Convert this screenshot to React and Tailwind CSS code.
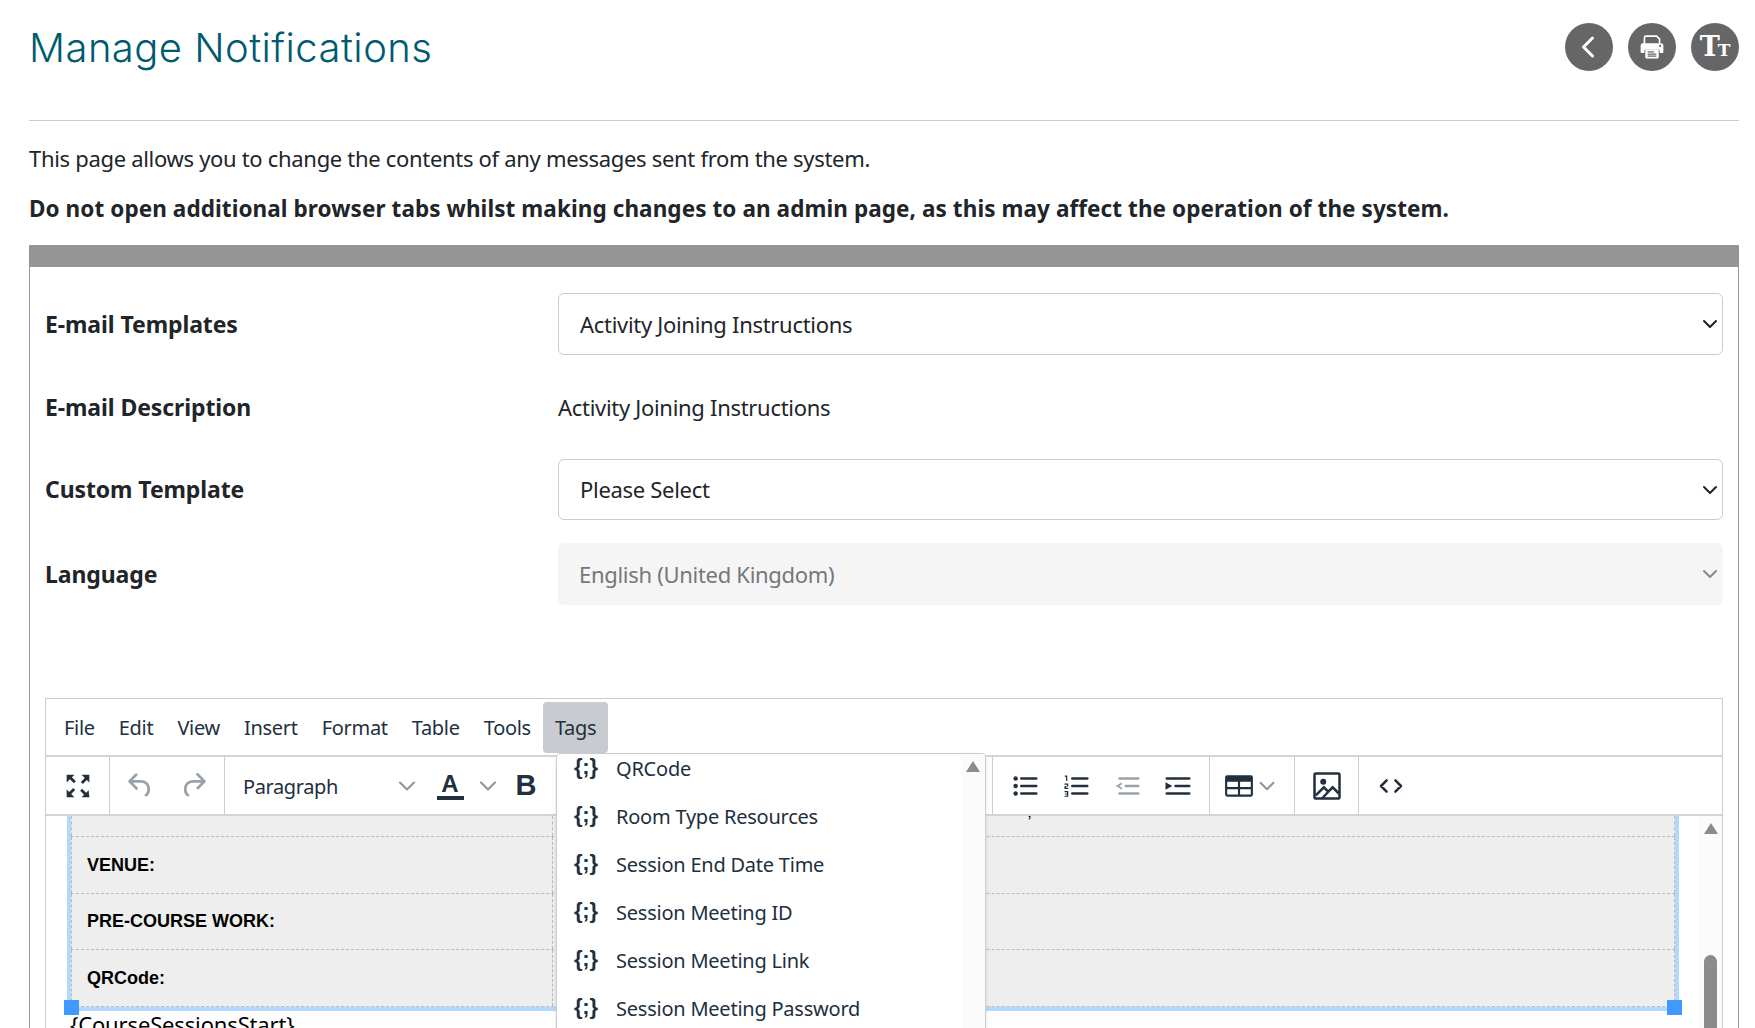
import React from 'react'
import { ChevronDown, ChevronLeft } from 'lucide-react'

const font = { fontFamily: '"Noto Sans", sans-serif' }

const menuItems = ['File', 'Edit', 'View', 'Insert', 'Format', 'Table', 'Tools']
const tags = ['QRCode', 'Room Type Resources', 'Session End Date Time', 'Session Meeting ID', 'Session Meeting Link', 'Session Meeting Password']

function CircleBtn({ children }) {
  return (
    <button className="w-12 h-12 rounded-full bg-[#666666] text-white flex items-center justify-center">
      {children}
    </button>
  )
}

function FormSelect({ value, disabled }) {
  return (
    <div className="relative w-[1165px] h-full">
      <select
        disabled={disabled}
        defaultValue={value}
        className={`appearance-none w-full h-full rounded-md pl-[21px] text-[22px] tracking-[-0.3px] outline-none ${
          disabled ? 'bg-[#f5f5f5] text-[#777777]' : 'bg-white border border-[#cccccc] text-[#212529]'
        }`}>
        <option>{value}</option>
      </select>
      <ChevronDown
        size={24}
        strokeWidth={2}
        className={`absolute right-[1px] top-1/2 -translate-y-1/2 ${disabled ? 'text-[#888888]' : 'text-[#222222]'}`}
      />
    </div>
  )
}

function FormRow({ label, height, children }) {
  return (
    <div className={`flex items-center ${height}`}>
      <div className="w-[513px] text-[23px] font-bold tracking-[-0.1px] text-[#212529]">{label}</div>
      {children}
    </div>
  )
}

function Divider() {
  return <div className="w-px self-stretch bg-[#cccccc]" />
}

const ink = '#222f3e'

function ToolIcon({ children, className = '', muted, size = 30 }) {
  return (
    <svg viewBox="0 0 24 24" width={size} height={size} className={className} fill={muted ? '#9aa1a9' : ink}>
      {children}
    </svg>
  )
}

export default function App() {
  return (
    <div className="h-[1028px] overflow-hidden bg-white pl-[29px] pr-[16px]" style={font}>
      {/* ── Title row ── */}
      <div className="flex justify-between items-start pt-[23px] h-[121px] border-b border-[#cccccc]">
        <h1 className="text-[40px] leading-[50px] tracking-[0.45px] text-[#005a70] font-light" style={{ fontFamily: 'Inter, sans-serif', fontWeight: 300 }}>Manage Notifications</h1>
        <div className="flex gap-[15px]">
          <CircleBtn><ChevronLeft size={36} strokeWidth={2} className="-ml-[2px]" /></CircleBtn>
          <CircleBtn>
            <svg viewBox="0 0 24 24" width="26" height="26">
              <path d="M5 9V3.5A1.5 1.5 0 0 1 6.5 2h9.8L19 4.7V9" fill="none" stroke="#fff" strokeWidth="1.5" />
              <path d="M3.5 8.5h17a2 2 0 0 1 2 2v6a1 1 0 0 1-1 1H19v-3H5v3H2.5a1 1 0 0 1-1-1v-6a2 2 0 0 1 2-2Z" fill="#fff" />
              <path d="M5.8 14.5h12.4v7a1 1 0 0 1-1 1H6.8a1 1 0 0 1-1-1Z" fill="#fff" />
              <path d="M8 16.5h6M8 18.5h8M8 20.5h8" stroke="#666" strokeWidth="1.1" />
              <circle cx="19.5" cy="11" r="1" fill="#666" />
            </svg>
          </CircleBtn>
          <CircleBtn>
            <span className="font-bold leading-none flex items-end -mt-[2px]" style={{ fontFamily: '"DejaVu Serif", serif' }}>
              <span className="text-[27px] leading-[27px]">T</span><span className="text-[17px] leading-[20px] -ml-[2px]">T</span>
            </span>
          </CircleBtn>
        </div>
      </div>

      <p className="mt-[22px] text-[22px] leading-[30px] tracking-[-0.31px] text-[#212529]">This page allows you to change the contents of any messages sent from the system.</p>
      <p className="mt-[21px] text-[22.5px] leading-[30px] font-bold tracking-[0.08px] text-[#212529]">Do not open additional browser tabs whilst making changes to an admin page, as this may affect the operation of the system.</p>

      {/* ── Panel ── */}
      <div className="mt-[21px] h-[800px] border-x border-[#999999]">
        <div className="h-[22px] bg-[#959595] -mx-px" />
        <div className="px-[15px] pt-[26px]">
          <div className="flex flex-col gap-[23px]">
            <FormRow label="E-mail Templates" height="h-[62px]"><FormSelect value="Activity Joining Instructions" /></FormRow>
            <FormRow label="E-mail Description" height="h-[58px]"><span className="text-[22px] tracking-[-0.3px] text-[#212529]">Activity Joining Instructions</span></FormRow>
            <FormRow label="Custom Template" height="h-[61px]"><FormSelect value="Please Select" /></FormRow>
            <FormRow label="Language" height="h-[62px]"><FormSelect value="English (United Kingdom)" disabled /></FormRow>
          </div>

          {/* ── Editor ── */}
          <div className="relative mt-[93px] h-[500px] border border-[#cccccc] text-[#222f3e]">
            <div className="h-[58px] flex items-start pl-[6px] pt-[3px] border-b-2 border-[#d4d4d4] text-[20px] tracking-[-0.3px]">
              {menuItems.map(m => (
                <div key={m} className="h-[51px] px-[12px] flex items-center">{m}</div>
              ))}
              <div className="h-[51px] px-[12px] flex items-center bg-[#c8cbcf] rounded">Tags</div>
            </div>

            <div className="h-[59px] flex items-stretch border-b-2 border-[#d4d4d4]">
              <div className="w-[63px] flex items-center justify-center">
                <ToolIcon size={34}>
                  <path d="M4 4h5.500L7.700 5.800l2.800 2.800-1.400 1.400-2.800-2.800L4 9.500ZM20 4v5.500l-1.800-1.800-2.800 2.800-1.400-1.400 2.800-2.800L14.500 4ZM4 20v-5.500l1.800 1.800 2.800-2.800 1.400 1.400-2.800 2.800L9.500 20ZM20 20h-5.500l1.800-1.800-2.800-2.800 1.400-1.400 2.800 2.800 1.800-1.800Z" />
                </ToolIcon>
              </div>
              <Divider />
              <div className="w-[114px] flex items-center justify-around px-[4px]">
                <ToolIcon muted size={33}>
                  <path d="M6.4 8H12c3.7 0 6.2 2 6.8 5.1.6 2.7-.4 5.6-2.3 6.8a1 1 0 0 1-1-1.8c1.1-.6 1.8-2.7 1.4-4.6-.5-2.1-2.1-3.5-4.9-3.5H6.4l3.3 3.3a1 1 0 1 1-1.4 1.4l-5-5a1 1 0 0 1 0-1.4l5-5a1 1 0 0 1 1.4 1.4L6.4 8Z" />
                </ToolIcon>
                <ToolIcon muted size={33}>
                  <path d="M17.6 10H12c-2.8 0-4.4 1.4-4.9 3.5-.4 2 .3 4 1.4 4.6a1 1 0 1 1-1 1.8c-2-1.2-2.9-4.1-2.3-6.8.6-3 3-5.1 6.8-5.1h5.6l-3.3-3.3a1 1 0 1 1 1.4-1.4l5 5a1 1 0 0 1 0 1.4l-5 5a1 1 0 0 1-1.4-1.4l3.3-3.3Z" />
                </ToolIcon>
              </div>
              <Divider />
              <div className="w-[206px] flex items-center pl-[18px] pt-[3px] text-[20px] tracking-[-0.4px]">
                <span>Paragraph</span>
                <ChevronDown size={28} strokeWidth={1.8} className="ml-auto mr-[10px] -mt-[3px] text-[#8c939b]" />
              </div>
              <div className="w-[38px] flex flex-col items-center justify-center">
                <span className="text-[24px] leading-[25px] font-bold" style={{ fontFamily: '"Liberation Sans", sans-serif' }}>A</span>
                <div className="w-[27px] h-[4px] bg-[#222f3e]" />
              </div>
              <div className="w-[38px] flex items-center justify-center">
                <ChevronDown size={28} strokeWidth={1.8} className="text-[#8c939b]" />
              </div>
              <div className="w-[38px] flex items-center justify-center text-[29px] font-bold" style={{ fontFamily: '"Liberation Sans", sans-serif' }}>B</div>
            </div>

            {/* right part of the toolbar, past the open menu */}
            <div className="absolute top-[58px] left-[946px] h-[57px] flex items-center gap-[21px] pl-[17px] border-l border-[#cccccc]">
              <ToolIcon>
                <circle cx="4.500" cy="6" r="1.800" /><circle cx="4.500" cy="12" r="1.800" /><circle cx="4.500" cy="18" r="1.800" />
                <rect x="8" y="5" width="14" height="2" rx="1" /><rect x="8" y="11" width="14" height="2" rx="1" /><rect x="8" y="17" width="14" height="2" rx="1" />
              </ToolIcon>
              <ToolIcon>
                <path d="M3 3.500h2v4.500H4V4.500H3ZM2.800 10h3v2.400H4v1h1.800v.9h-3v-2.400h2v-1H2.800ZM2.800 16h3v4.600h-3v-.9h2v-.9h-1.600v-.9h1.600V17h-2Z" />
                <rect x="8" y="5" width="14" height="2" rx="1" /><rect x="8" y="11" width="14" height="2" rx="1" /><rect x="8" y="17" width="14" height="2" rx="1" />
              </ToolIcon>
              <ToolIcon muted>
                <rect x="5" y="5" width="17" height="2" rx="1" /><rect x="10" y="11" width="12" height="2" rx="1" /><rect x="5" y="17" width="17" height="2" rx="1" />
                <path d="M8 9 3 12l5 3v-1.600L5.800 12 8 10.600Z" />
              </ToolIcon>
              <ToolIcon>
                <rect x="2" y="5" width="20" height="2" rx="1" /><rect x="9" y="11" width="13" height="2" rx="1" /><rect x="2" y="17" width="20" height="2" rx="1" />
                <path d="M2 9v6l5.500-3Z" />
              </ToolIcon>
            </div>
            <div className="absolute top-[58px] left-[1163px] h-[57px] flex items-stretch">
              <Divider />
              <div className="w-[84px] flex items-center pl-[14px]">
                <svg viewBox="0 0 28 24" width="30" height="26" fill={ink}>
                  <path d="M3 2h22a2 2 0 0 1 2 2v16a2 2 0 0 1-2 2H3a2 2 0 0 1-2-2V4a2 2 0 0 1 2-2Zm0 6v5h10V8Zm12 0v5h10V8ZM3 15v5h10v-5Zm12 0v5h10v-5Z" fillRule="evenodd" />
                </svg>
                <ChevronDown size={26} strokeWidth={1.8} className="text-[#8c939b]" />
              </div>
              <Divider />
              <div className="w-[63px] flex items-center justify-center">
                <svg viewBox="0 0 24 24" width="30" height="30" fill="none" stroke={ink} strokeWidth="2">
                  <rect x="2" y="2" width="20" height="20" rx="1" />
                  <circle cx="9" cy="8.500" r="2.400" fill={ink} stroke="none" />
                  <path d="M3 19.500 9.500 13l3.500 3.500 3.500-3.500 5 5M8 22l8.500-9" />
                </svg>
              </div>
              <Divider />
              <div className="w-[64px] flex items-center justify-center">
                <svg viewBox="0 0 24 24" width="30" height="30" fill="none" stroke={ink} strokeWidth="2" strokeLinecap="round" strokeLinejoin="round">
                  <path d="m8.500 7.500-4.500 4.500 4.500 4.500M15.500 7.500l4.500 4.500-4.500 4.500" />
                </svg>
              </div>
            </div>

            {/* ── Editor body ── */}
            <div className="relative h-[300px] overflow-hidden text-black">
              <div className="ml-[21px] w-[1612px] h-[195px] bg-[#eeeeee] border-x-4 border-b-4 border-[#b4d7ff]">
                {[21, 57, 56, 57].map((h, i) => (
                  <div key={i} className="flex border-b border-dashed border-[#bbbbbb] border-x-0" style={{ height: h }}>
                    <div className="w-[482px] pl-[15px] flex items-center border-x border-dashed border-[#bbbbbb] text-[18px] font-bold" style={{ fontFamily: '"Liberation Sans", sans-serif' }}>
                      {['', 'VENUE:', 'PRE-COURSE WORK:', 'QRCode:'][i]}
                    </div>
                    <div className="flex-1 border-r border-dashed border-[#bbbbbb] relative">
                      {i === 0 && <span className="absolute left-[474px] -top-[18px] text-[18px]" style={{ fontFamily: '"Liberation Sans", sans-serif' }}>,</span>}
                    </div>
                  </div>
                ))}
              </div>
              <p className="ml-[24px] text-[22px] leading-[26px] tracking-[-0.15px]">{'{CourseSessionsStart}'}</p>
              <div className="absolute left-[18px] top-[184px] w-[15px] h-[15px] bg-[#4099ff]" />
              <div className="absolute left-[1621px] top-[184px] w-[15px] h-[15px] bg-[#4099ff]" />
              {/* scrollbar */}
              <div className="absolute right-0 top-0 bottom-0 w-[23px] bg-[#fbfbfb]">
                <div className="mx-auto mt-[7px] w-0 h-0 border-x-[7px] border-x-transparent border-b-[11px] border-b-[#8b8b8b]" />
                <div className="absolute left-[5px] top-[139px] w-[13px] h-[200px] rounded-full bg-[#8b8b8b]" />
              </div>
            </div>

            {/* ── Tags dropdown ── */}
            <div className="absolute left-[510px] top-[54px] w-[430px] h-[300px] bg-white border border-[#cccccc] rounded-t shadow-md overflow-hidden text-[20px] tracking-[-0.23px]">
              <div className="-mt-[9px]">
                {tags.map(t => (
                  <div key={t} className="h-[48px] flex items-center">
                    <span className="w-[59px] pl-[17px] font-bold text-[22px] leading-none -mt-[5px]" style={{ fontFamily: '"Liberation Sans", sans-serif' }}>{'{;}'}</span>
                    <span>{t}</span>
                  </div>
                ))}
              </div>
              <div className="absolute right-0 top-0 bottom-0 w-[24px] bg-[#fbfbfb]">
                <div className="mx-auto mt-[7px] w-0 h-0 border-x-[7px] border-x-transparent border-b-[11px] border-b-[#8b8b8b]" />
              </div>
            </div>
          </div>
        </div>
      </div>
    </div>
  )
}
